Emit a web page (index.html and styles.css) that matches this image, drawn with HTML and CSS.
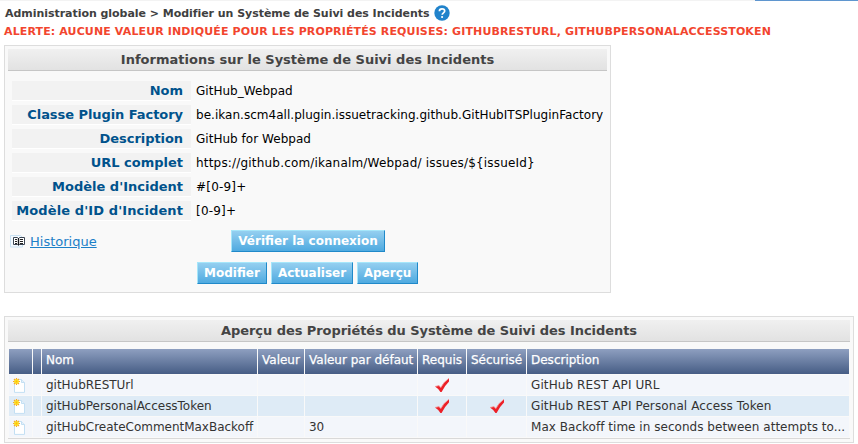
FILE: index.html
```html
<!DOCTYPE html>
<html lang="fr">
<head>
<meta charset="utf-8">
<title>Modifier un Système de Suivi des Incidents</title>
<link rel="stylesheet" href="styles.css">
</head>
<body>
<svg class="defs" width="0" height="0" aria-hidden="true">
  <symbol id="check" viewBox="0 0 16 16"><path d="M1 9.500 L5 8.600 L6.800 10.600 Q9.500 5 15 1.200 L15 4.600 Q10.500 9 7.600 15 L6.400 15 Q4.500 11.600 1 9.500Z" fill="#ec2028"/><path d="M1 9.500 L5 8.600 L6.800 10.600 Q9.500 5 15 1.200" fill="none" stroke="#f59a9a" stroke-width=".8"/></symbol>
  <symbol id="newdoc" viewBox="0 0 14 15"><path d="M2.500 1.500h7l3 3v9.900h-10z" fill="#fff" stroke="#c3dff3"/><path d="M9.500 1.500v3h3" fill="#e4f1fb" stroke="#c3dff3"/><path d="M4.500 0v7M1 3.500h7M2 1l5 5M7 1l-5 5" stroke="#f7a52b" stroke-width="1.200"/><circle cx="4.500" cy="3.500" r="2.300" fill="#ffe51c"/><circle cx="4.500" cy="3.500" r=".9" fill="#fcb514"/></symbol>
</svg>
<div class="topbar"><span class="topbar-active"></span></div>
<div class="page">
  <div class="crumbs"><span>Administration globale &gt; Modifier un Système de Suivi des Incidents</span>
    <svg class="help" viewBox="0 0 16 16"><circle cx="8" cy="8" r="7.700" fill="#2183cb"/><path d="M5.400 6.300C5.400 4.600 6.500 3.900 8 3.900s2.700.8 2.700 2.200c0 1.800-2.500 1.800-2.500 3.700" fill="none" stroke="#fff" stroke-width="1.700"/><circle cx="8.100" cy="12" r="1.100" fill="#fff"/></svg>
  </div>
  <div class="alert">ALERTE: AUCUNE VALEUR INDIQUÉE POUR LES PROPRIÉTÉS REQUISES: GITHUBRESTURL, GITHUBPERSONALACCESSTOKEN</div>

  <section class="panel info">
    <h2>Informations sur le Système de Suivi des Incidents</h2>
    <dl>
      <dt>Nom</dt><dd>GitHub_Webpad</dd>
      <dt class="snug">Classe Plugin Factory</dt><dd>be.ikan.scm4all.plugin.issuetracking.github.GitHubITSPluginFactory</dd>
      <dt class="snug">Description</dt><dd>GitHub for Webpad</dd>
      <dt>URL complet</dt><dd class="url">https://github.com/ikanalm/Webpad/ issues/${issueId}</dd>
      <dt>Modèle d'Incident</dt><dd class="pattern">#[0-9]+</dd>
      <dt class="wide">Modèle d'ID d'Incident</dt><dd class="pattern">[0-9]+</dd>
    </dl>
    <div class="actions">
      <a class="history"><svg viewBox="0 0 15 14"><path d="M.5 1.500h10l2 2v9.500h-12z" fill="#f4faff" stroke="#c9e1f3"/><path d="M3.500 3.500h4l1 1 1-1h5v7h-5l-1 1-1-1h-4z" fill="#fff" stroke="#3c4654"/><path d="M8.500 4v7" stroke="#15181d" stroke-width="1.400"/><path d="M5 5.500h2M5 7.500h2M5 9.500h2M10 5.500h3M10 7.500h3M10 9.500h3" stroke="#222"/></svg><span>Historique</span></a>
      <button class="verify">Vérifier la connexion</button>
    </div>
    <div class="buttons">
      <button class="edit">Modifier</button><button class="refresh">Actualiser</button><button class="overview">Aperçu</button>
    </div>
  </section>

  <section class="panel props">
    <h2>Aperçu des Propriétés du Système de Suivi des Incidents</h2>
    <div class="grid">
      <div class="row head"><b></b><b></b><b>Nom</b><b>Valeur</b><b>Valeur par défaut</b><b>Requis</b><b>Sécurisé</b><b>Description</b></div>
      <div class="row"><i><svg class="new"><use href="#newdoc"/></svg></i><i></i><i>gitHubRESTUrl</i><i></i><i></i><i class="mark"><svg><use href="#check"/></svg></i><i></i><i class="loose">GitHub REST API URL</i></div>
      <div class="row alt"><i><svg class="new"><use href="#newdoc"/></svg></i><i></i><i>gitHubPersonalAccessToken</i><i></i><i></i><i class="mark"><svg><use href="#check"/></svg></i><i class="mark"><svg><use href="#check"/></svg></i><i class="loose">GitHub REST API Personal Access Token</i></div>
      <div class="row"><i><svg class="new"><use href="#newdoc"/></svg></i><i></i><i>gitHubCreateCommentMaxBackoff</i><i></i><i>30</i><i></i><i></i><i class="note">Max Backoff time in seconds between attempts to...</i></div>
    </div>
  </section>
</div>
</body>
</html>
```
FILE: styles.css
```css
* { box-sizing: border-box; }
body { margin: 0; background: #fff; color: #000; font: 12px "DejaVu Sans", Verdana, sans-serif; overflow: hidden; }
.defs { display: block; height: 0; }
.topbar { display: flex; justify-content: flex-end; height: 1px; background: #f3f3f3; }
.topbar-active { width: 103px; background: #5f96cf; }
.page { padding: 4px 4px 0; }

.crumbs { display: flex; align-items: flex-start; height: 17px; line-height: 17px; padding-left: 1px; font-size: 11px; font-weight: bold; letter-spacing: -.04px; color: #404040; white-space: nowrap; }
.help { width: 16px; height: 16px; margin-left: 5px; }
.alert { height: 18px; line-height: 19px; font-size: 11px; font-weight: bold; letter-spacing: .128px; color: #f2452e; white-space: nowrap; }

.panel { border: 1px solid #ddd; background: #f9f9f9; padding: 3px; }
.panel h2 { margin: 0; height: 22px; line-height: 21px; border-bottom: 1px solid #c6c6c6; background: linear-gradient(#f0f0f0, #e2e2e2); color: #444; font-size: 13px; letter-spacing: .01px; text-align: center; }

.info { width: 607px; height: 248px; margin-top: 5px; }
dl { display: grid; grid-template-columns: 179px 1fr; grid-auto-rows: 19px; gap: 5px; margin: 10px 0 0 4px; line-height: 19px; white-space: nowrap; }
dt { padding-right: 8px; background: #f2f2f2; box-shadow: 0 1px #fff; color: #00528c; font-size: 13px; font-weight: bold; text-align: right; }
dd { margin: 0; line-height: 21px; letter-spacing: .03px; }
.snug { letter-spacing: -.06px; }
.wide { letter-spacing: .11px; }
.url { letter-spacing: .19px; }
.pattern { letter-spacing: .2px; }

.actions { display: flex; align-items: center; margin-top: 10px; height: 22px; padding-left: 2px; }
.history { display: flex; align-items: center; width: 221px; gap: 5px; color: #1c80c8; font-size: 13px; }
.history svg { width: 15px; height: 14px; }
.history span { text-decoration: underline; }
button { height: 22px; padding: 0 0 1px; border: 1px solid; border-color: #a5e6fa #2089c9 #2089c9 #a5e6fa; background: linear-gradient(#95cff0, #4faae0); color: #fff; font: bold 12px "DejaVu Sans", Verdana, sans-serif; white-space: nowrap; }
.buttons { display: flex; gap: 4px; margin: 10px 0 0 189px; }
.verify { width: 154px; }
.edit { width: 70px; }
.refresh { width: 82px; }
.overview { width: 61px; }

.props { width: 850px; height: 127px; margin-top: 23px; }
.props h2 { letter-spacing: -.06px; }
.grid { padding: 7px 1px 0; border-bottom: 1px solid #d9d9d9; color: #333; }
.row { display: grid; grid-template-columns: 23px 8px 215px 46px 112px 48px 59px 322px; column-gap: 1px; height: 21px; line-height: 20px; white-space: nowrap; border-bottom: 1px solid #f9f9f9; }
.row i { display: block; font-style: normal; padding-left: 4px; letter-spacing: -.02px; background: #f3f6fb; }
.row.alt i { background: #deebf6; }
.row .loose { letter-spacing: .1px; }
.row .note { letter-spacing: .03px; }
.head { height: 26px; line-height: 23px; }
.head b { padding-left: 4px; background: linear-gradient(#8e9fc0, #465d85); color: #fff; font-weight: normal; -webkit-text-stroke: .25px #fff; }
.row .mark { display: flex; justify-content: center; align-items: center; padding: 0; }
.mark svg { width: 16px; height: 16px; }
.row .new { display: block; width: 14px; height: 15px; margin: 3px 0 0 -1px; }
```
